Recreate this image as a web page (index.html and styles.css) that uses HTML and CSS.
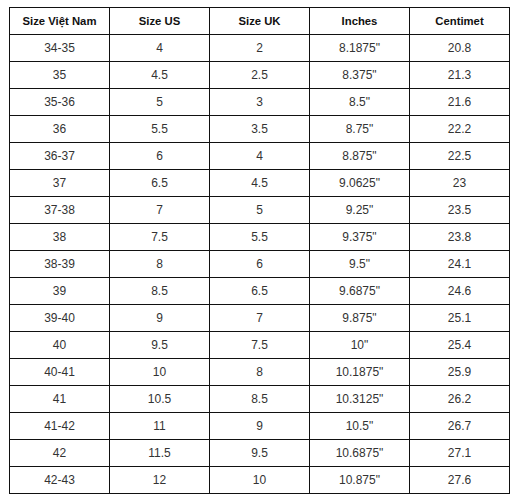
FILE: index.html
```html
<!DOCTYPE html>
<html>
<head>
<meta charset="utf-8">
<link rel="stylesheet" href="styles.css">
</head>
<body>
<table class="size-table">
<thead>
<tr><th>Size Việt Nam</th><th>Size US</th><th>Size UK</th><th>Inches</th><th>Centimet</th></tr>
</thead>
<tbody>
<tr><td>34-35</td><td>4</td><td>2</td><td>8.1875"</td><td>20.8</td></tr>
<tr><td>35</td><td>4.5</td><td>2.5</td><td>8.375"</td><td>21.3</td></tr>
<tr><td>35-36</td><td>5</td><td>3</td><td>8.5"</td><td>21.6</td></tr>
<tr><td>36</td><td>5.5</td><td>3.5</td><td>8.75"</td><td>22.2</td></tr>
<tr><td>36-37</td><td>6</td><td>4</td><td>8.875"</td><td>22.5</td></tr>
<tr><td>37</td><td>6.5</td><td>4.5</td><td>9.0625"</td><td>23</td></tr>
<tr><td>37-38</td><td>7</td><td>5</td><td>9.25"</td><td>23.5</td></tr>
<tr><td>38</td><td>7.5</td><td>5.5</td><td>9.375"</td><td>23.8</td></tr>
<tr><td>38-39</td><td>8</td><td>6</td><td>9.5"</td><td>24.1</td></tr>
<tr><td>39</td><td>8.5</td><td>6.5</td><td>9.6875"</td><td>24.6</td></tr>
<tr><td>39-40</td><td>9</td><td>7</td><td>9.875"</td><td>25.1</td></tr>
<tr><td>40</td><td>9.5</td><td>7.5</td><td>10"</td><td>25.4</td></tr>
<tr><td>40-41</td><td>10</td><td>8</td><td>10.1875"</td><td>25.9</td></tr>
<tr><td>41</td><td>10.5</td><td>8.5</td><td>10.3125"</td><td>26.2</td></tr>
<tr><td>41-42</td><td>11</td><td>9</td><td>10.5"</td><td>26.7</td></tr>
<tr><td>42</td><td>11.5</td><td>9.5</td><td>10.6875"</td><td>27.1</td></tr>
<tr><td>42-43</td><td>12</td><td>10</td><td>10.875"</td><td>27.6</td></tr>
</tbody>
</table>
</body>
</html>
```
FILE: styles.css
```css
html, body {
  margin: 0;
  padding: 0;
  background: #fff;
}
body {
  font-family: "Liberation Sans", Arial, sans-serif;
  font-size: 12px;
  color: #333;
}
.size-table {
  margin: 7px 0 0 9px;
  border-collapse: collapse;
  table-layout: fixed;
  width: 496px;
}
.size-table th,
.size-table td {
  border: 1px solid #111;
  height: 26px;
  padding: 0;
  text-align: center;
  vertical-align: middle;
  width: 99px;
}
.size-table th {
  font-size: 11.3px;
  font-weight: bold;
  color: #111;
}
```
